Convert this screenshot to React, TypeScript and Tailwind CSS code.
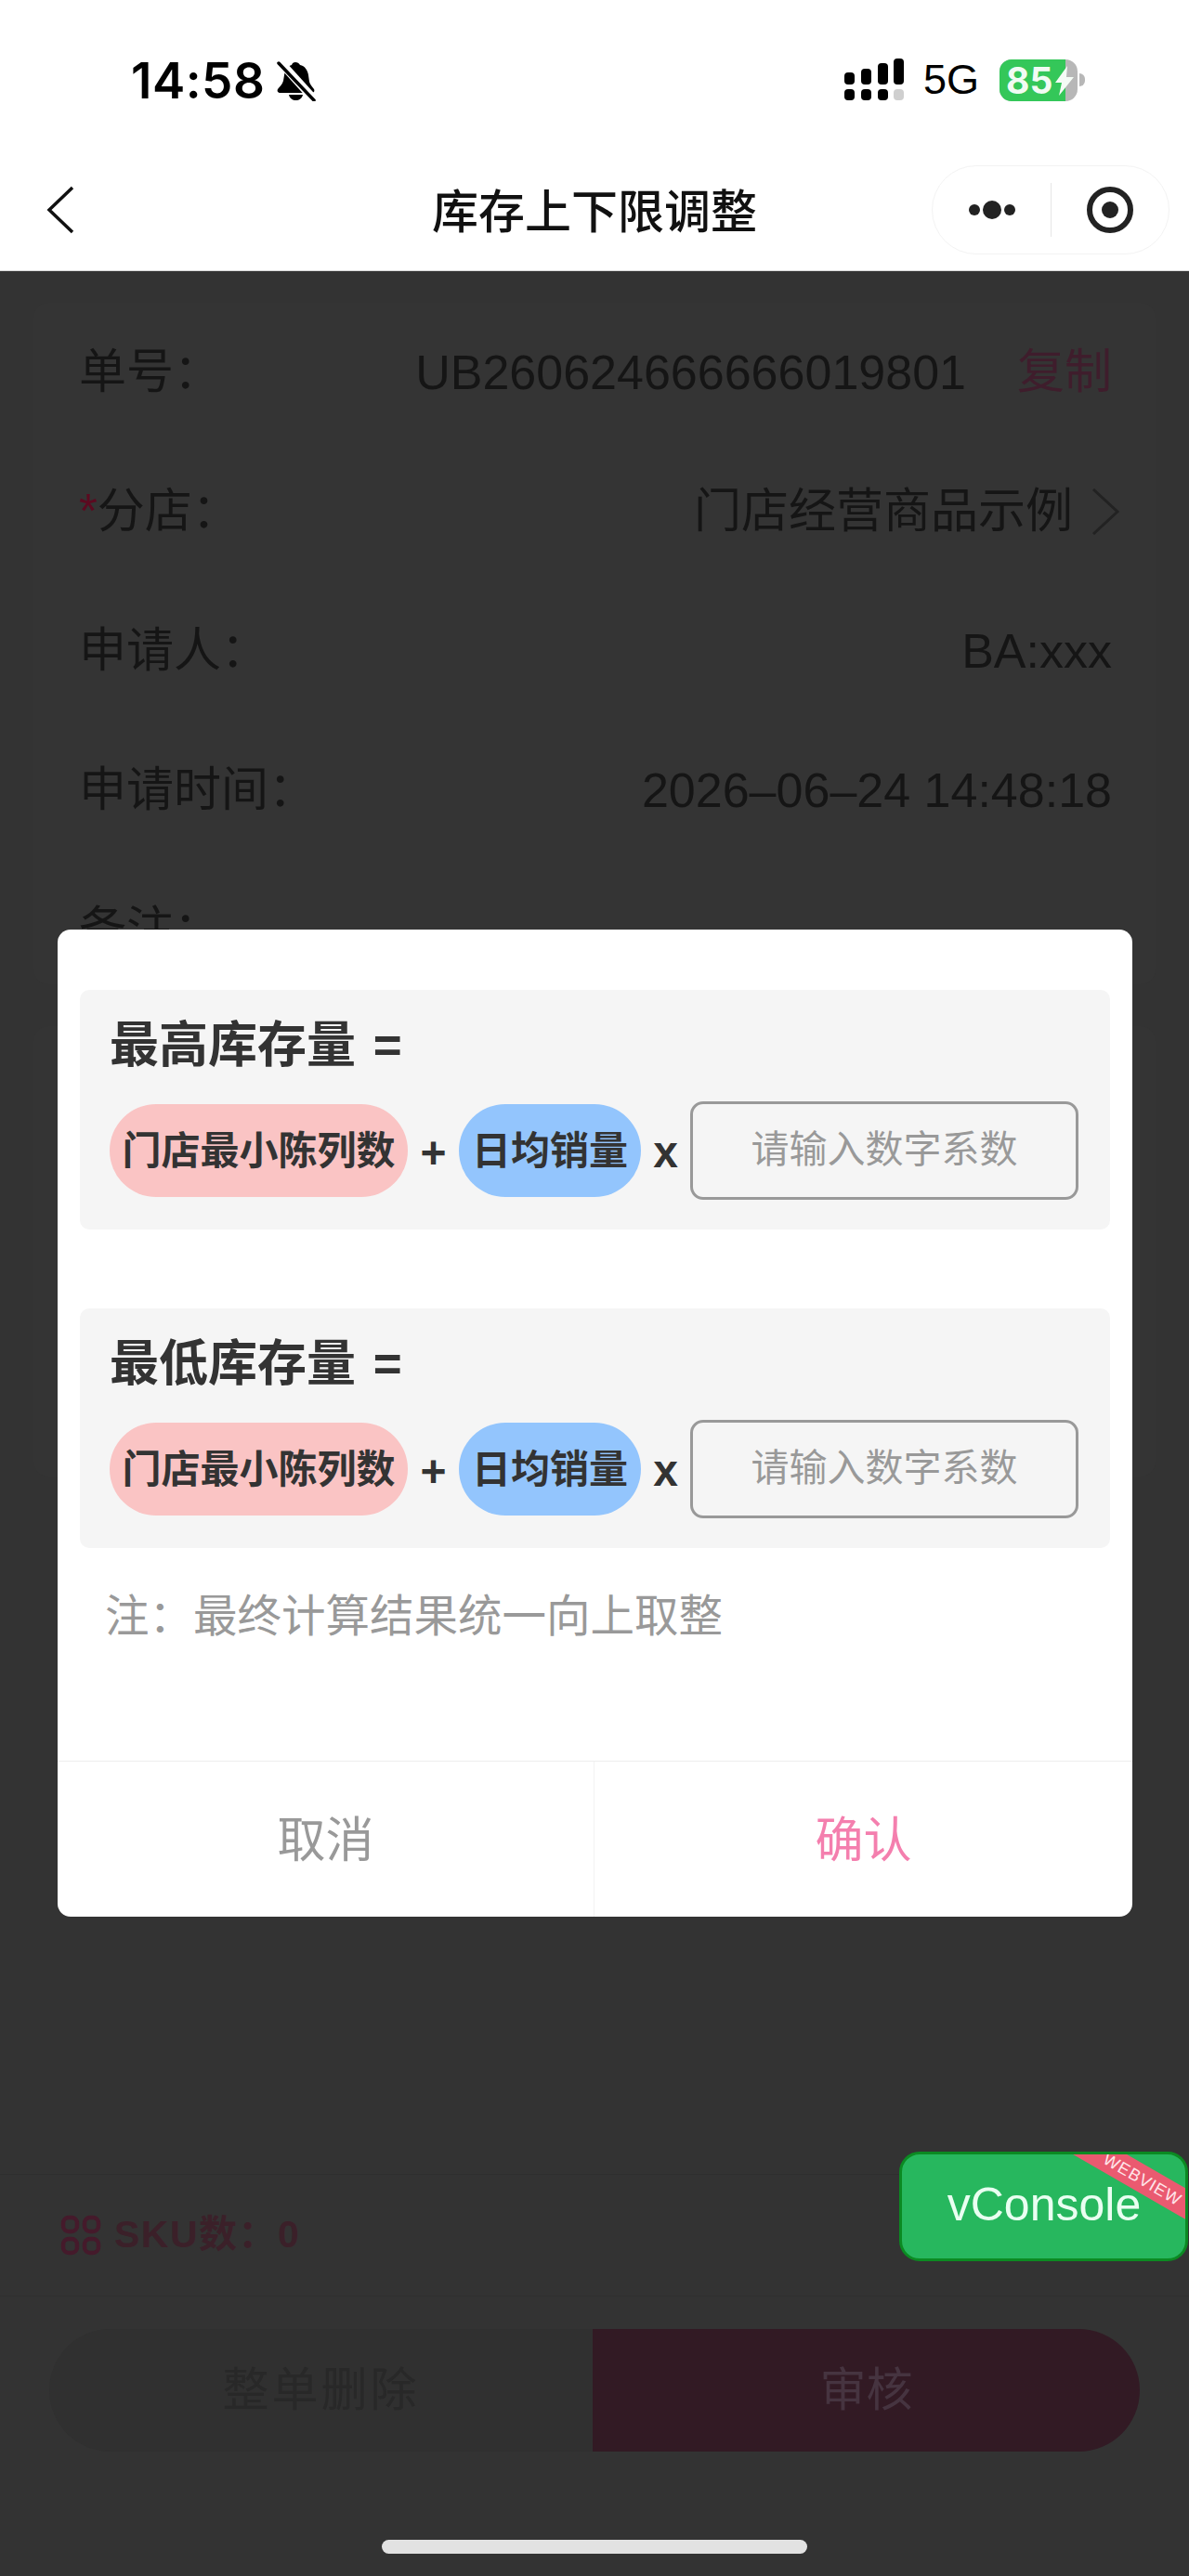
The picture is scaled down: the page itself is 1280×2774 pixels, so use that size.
import React from "react";

const SANS = "font-['Liberation_Sans','Noto_Sans_CJK_SC',sans-serif]";

function SignalIcon() {
  return (
    <svg width="66" height="46" viewBox="0 0 66 46" fill="#000">
      <rect x="0" y="15" width="11" height="13" rx="4" />
      <rect x="18" y="11" width="11" height="17" rx="4" />
      <rect x="36" y="5" width="11" height="23" rx="4" />
      <rect x="53" y="0" width="11" height="28" rx="4" />
      <rect x="0" y="33" width="11" height="12" rx="4" />
      <rect x="18" y="33" width="11" height="12" rx="4" />
      <rect x="36" y="33" width="11" height="12" rx="4" />
      <rect x="53" y="33" width="11" height="12" rx="4" fill="#cfcfcf" />
    </svg>
  );
}

function MuteBell() {
  return (
    <svg width="44" height="44" viewBox="0 0 44 44">
      <path d="M21 2c2 0 4 1 5 3 5 1 8 5 9 11l1 7c.6 3 3 5 5 8 1 2 0 4-3 4H5c-3 0-4-2-3-4 2-3 5-5 6-9l1-6c1-6 4-10 8-11 .6-2 2-3 4-3z" fill="#000" />
      <path d="M14 37h15c-1 4-4 6-7.500 6S15 41 14 37z" fill="#000" />
      <path d="M4 1l37 41" stroke="#fff" strokeWidth="9" />
      <path d="M3 3l38 40" stroke="#000" strokeWidth="3.500" strokeLinecap="round" />
    </svg>
  );
}

function Battery() {
  return (
    <div className="flex items-center gap-[2px]">
      <div className="relative flex h-[45px] w-[84px] overflow-hidden rounded-[13px] bg-[#b7b7b7]">
        <div className="flex h-full w-[71px] items-center bg-[#34c759] pl-[7px]">
          <span className="font-['Inter',sans-serif] text-[39px] font-bold leading-none text-[#f1fbf3]">85</span>
        </div>
        <svg className="absolute left-[60px] top-[7px]" width="20" height="32" viewBox="0 0 20 32">
          <path d="M13 0 0 18h7L4 32 20 12h-8z" fill="#f4fbf5" />
        </svg>
      </div>
      <div className="h-[14px] w-[6px] rounded-r-full bg-[#b7b7b7]" />
    </div>
  );
}

function Capsule() {
  return (
    <div className="flex h-[96px] w-[256px] items-center rounded-full border border-[#f3f3f3] bg-white">
      <div className="flex h-[58px] w-[128px] items-center justify-center gap-[3px] border-r border-[#e6e6e6]">
        <span className="h-[12px] w-[12px] rounded-full bg-[#222]" />
        <span className="h-[20px] w-[20px] rounded-full bg-[#222]" />
        <span className="h-[12px] w-[12px] rounded-full bg-[#222]" />
      </div>
      <div className="flex flex-1 items-center justify-center">
        <div className="flex h-[50px] w-[50px] items-center justify-center rounded-full border-[6px] border-[#222]">
          <span className="h-[18px] w-[18px] rounded-full bg-[#222]" />
        </div>
      </div>
    </div>
  );
}

function Row({ children }: { children: React.ReactNode }) {
  return <div className="flex h-[150px] items-center justify-between pl-[49px] pr-[47px] text-[#151515]">{children}</div>;
}

function Formula({ title }: { title: string }) {
  return (
    <div className="mx-[24px] h-[258px] rounded-[10px] bg-[#f5f5f5] pl-[32px] pt-[30px]">
      <div className="h-[60px] text-[53px] font-bold leading-[60px] text-[#333]">
        {title} <span className="ml-[4px]">=</span>
      </div>
      <div className="mt-[30px] flex items-center text-[#333]">
        <div className="flex h-[100px] w-[321px] items-center justify-center rounded-[50px] bg-[#fac4c4] text-[42px] font-bold whitespace-nowrap">门店最小陈列数</div>
        <div className="w-[55px] pt-[6px] text-center text-[48px] font-bold">+</div>
        <div className="flex h-[100px] w-[196px] items-center justify-center rounded-[50px] bg-[#93c5fd] text-[42px] font-bold whitespace-nowrap">日均销量</div>
        <div className="w-[53px] pt-[4px] text-center text-[48px] font-bold">x</div>
        <div className="flex h-[106px] w-[418px] items-center justify-center rounded-[14px] border-[3px] border-[#999] text-[41px] text-[#999]">请输入数字系数</div>
      </div>
    </div>
  );
}

export default function App() {
  return (
    <div lang="zh-CN" className={`relative flex h-[2774px] w-[1280px] flex-col overflow-hidden bg-[#333] ${SANS}`}>
      <header className="h-[292px] shrink-0 border-b border-[#d8d8d8] bg-white text-black">
        <div className="flex h-[150px] items-start justify-between pl-[141px] pr-[112px] pt-[63px]">
          <div className="flex items-center gap-[12px]">
            <span className="font-['Inter',sans-serif] text-[53px] font-semibold leading-[48px] tracking-[0.5px]">14:58</span>
            <MuteBell />
          </div>
          <div className="flex items-center">
            <SignalIcon />
            <span className="ml-[19px] text-[45px] leading-[46px]">5G</span>
            <div className="ml-[22px]">
              <Battery />
            </div>
          </div>
        </div>
        <div className="grid h-[141px] grid-cols-[1fr_auto_1fr] items-start">
          <div className="pl-[50px] pt-[50px]">
            <svg width="30" height="52" viewBox="0 0 30 52" fill="none">
              <path d="M28 2 3 26l25 24" stroke="#111" strokeWidth="3.500" />
            </svg>
          </div>
          <div className="pt-[49px] text-[50px] font-medium leading-[60px] text-[#111]">库存上下限调整</div>
          <div className="flex justify-end pr-[21px] pt-[28px]">
            <Capsule />
          </div>
        </div>
      </header>

      <main className="flex-1 px-[36px] pt-[34px] text-[51px] leading-[60px]">
        <section className="h-[734px] rounded-[16px] bg-[#343434]">
          <Row>
            <span>单号：</span>
            <span className="flex items-center">
              <span className="text-[52px]">UB260624666666019801</span>
              <span className="ml-[55px] text-[#3f1d2c]">复制</span>
            </span>
          </Row>
          <Row>
            <span>
              <span className="text-[#5c0a20]">*</span>分店：
            </span>
            <span className="flex items-center">
              门店经营商品示例
              <svg className="ml-[20px] mr-[-9px]" width="31" height="50" viewBox="0 0 31 50" fill="none">
                <path d="M2 1l26 24L2 49" stroke="#222" strokeWidth="3" />
              </svg>
            </span>
          </Row>
          <Row>
            <span>申请人：</span>
            <span className="text-[52px]">BA:xxx</span>
          </Row>
          <Row>
            <span>申请时间：</span>
            <span className="text-[52px]">2026–06–24 14:48:18</span>
          </Row>
          <Row>
            <span>备注：</span>
          </Row>
        </section>
        <section className="mt-[45px] h-[485px] rounded-[16px] bg-[#343434]" />
      </main>

      <section className="flex h-[132px] shrink-0 items-center border-y border-[#2f2f2f] pl-[65px] text-[41px] font-bold tracking-[1.5px] text-[#3b2029]">
        <svg width="44" height="44" viewBox="0 0 44 44" fill="none" stroke="#451a2b" strokeWidth="4.500">
          <rect x="3" y="3" width="15" height="15" rx="6" />
          <rect x="26" y="3" width="15" height="15" rx="6" />
          <rect x="3" y="26" width="15" height="15" rx="6" />
          <rect x="26" y="26" width="15" height="15" rx="6" />
        </svg>
        <span className="ml-[14px]">SKU数：0</span>
      </section>

      <section className="mx-[53px] mb-[134px] mt-[35px] flex h-[132px] shrink-0 overflow-hidden rounded-[66px] text-[50px] leading-none">
        <div className="flex flex-1 items-center justify-center bg-[#303030] tracking-[3px] text-[#282828]">整单删除</div>
        <div className="flex w-[589px] items-center justify-center bg-[#321a24] text-[#463440]">审核</div>
      </section>

      <div className="absolute left-[62px] top-[1001px] flex h-[1063px] w-[1157px] flex-col overflow-hidden rounded-[14px] bg-white pt-[65px]">
        <Formula title="最高库存量" />
        <div className="mt-[85px]">
          <Formula title="最低库存量" />
        </div>
        <div className="mt-[44px] pl-[51px] text-[47.500px] leading-[60px] text-[#999]">注：最终计算结果统一向上取整</div>
        <div className="mt-auto flex h-[168px] border-t border-[#eee] text-[52px]">
          <div className="flex w-[578px] items-center justify-center border-r border-[#f2f2f2] pt-[2px] text-[#999]">取消</div>
          <div className="flex flex-1 items-center justify-center pt-[2px] text-[#f47fae]">确认</div>
        </div>
      </div>

      <div className="absolute left-[968px] top-[2317px] flex h-[118px] w-[311px] items-center justify-center overflow-hidden rounded-[22px] border-[3px] border-[#0b8a22] bg-[#27b75e] text-[50px] text-[#e9fff1]">
        <span className="mt-[-4px] ml-[1px]">vConsole</span>
        <div className="absolute left-[149px] top-[12px] h-[29px] w-[220px] rotate-[30deg] bg-[#ea5a70]" />
        <span className="absolute left-[210px] top-[17px] w-[98px] rotate-[30deg] text-center text-[18px] leading-[20px] tracking-[1px] text-[#ffe6ea]">WEBVIEW</span>
      </div>

      <div className="absolute left-[411px] top-[2735px] h-[15px] w-[458px] rounded-full bg-[#e2e2e2]" />
    </div>
  );
}
